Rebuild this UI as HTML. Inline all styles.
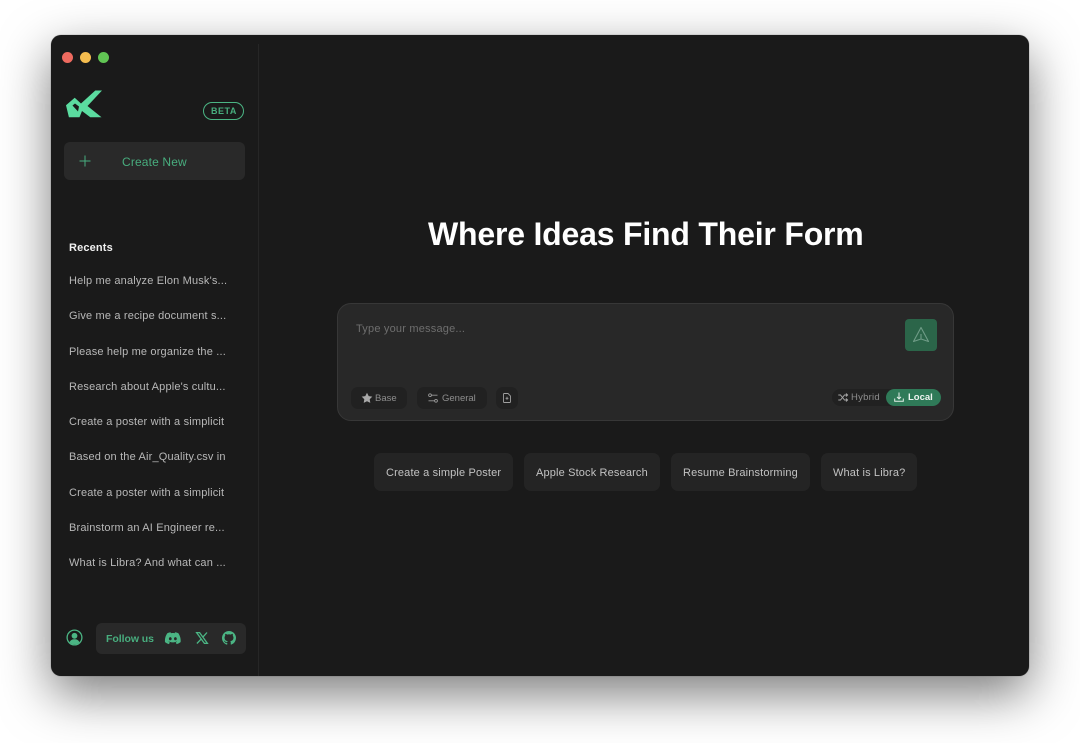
<!DOCTYPE html>
<html><head><meta charset="utf-8"><style>
*{box-sizing:border-box}
html,body{margin:0;padding:0;background:#fff;width:1080px;height:743px;overflow:hidden;font-family:"Liberation Sans",sans-serif}
.win{position:absolute;left:51px;top:35px;width:978px;height:641px;background:#1a1a1a;border-radius:10px;box-shadow:0 18px 50px rgba(0,0,0,.52),0 0 1px rgba(0,0,0,.5)}
.abs,.t{position:absolute}
.t{white-space:nowrap;line-height:14px}
.g{color:#48ad7e}
.r{color:#b8b8b8;font-size:11px;left:69px;letter-spacing:.17px}
.box{position:absolute;border-radius:6px}
svg{position:absolute;overflow:visible}
.s{color:#c2c2c2;font-size:11px;letter-spacing:.15px;top:466px}
.c{background:#242424;top:453px;height:38px;border-radius:7px}
</style></head><body>
<div class="win"></div>
<div class="abs" style="left:258px;top:44px;width:1px;height:632px;background:#262626"></div>
<div class="abs" style="left:62px;top:52px;width:11px;height:11px;border-radius:50%;background:#ee6a5f"></div>
<div class="abs" style="left:80px;top:52px;width:11px;height:11px;border-radius:50%;background:#f5bd4f"></div>
<div class="abs" style="left:98px;top:52px;width:11px;height:11px;border-radius:50%;background:#61c554"></div>

<svg style="left:0;top:0" width="1080" height="743"><path fill-rule="evenodd" fill="#5bdca0" d="M95.300 90.500H102L87.500 106 101.500 117.200H90.300L82 111 79.500 117.200H68.900L66 105.300 74.700 97.700 81 103.500ZM72.500 105.500 78 111.500 79 106.500 75 103.500Z"/></svg>
<div class="abs" style="left:203px;top:102px;width:41px;height:18px;border:1px solid #4bb584;border-radius:9px"></div>
<div class="t g" style="left:211px;top:104px;font-size:9px;font-weight:bold;letter-spacing:.5px">BETA</div>

<div class="box" style="left:64px;top:142px;width:181px;height:38px;background:#292929"></div>
<svg style="left:79px;top:155px" width="12" height="12"><path d="M6 .5V11.500M.5 6H11.500" stroke="#48ad7e" stroke-width="1" fill="none"/></svg>
<div class="t g" style="left:122px;top:155px;font-size:12px;letter-spacing:.15px">Create New</div>

<div class="t" style="left:69px;top:241px;font-size:11px;font-weight:bold;color:#f0f0f0;letter-spacing:.15px">Recents</div>
<div class="t r" style="top:274px">Help me analyze Elon Musk's...</div>
<div class="t r" style="top:309px">Give me a recipe document s...</div>
<div class="t r" style="top:345px">Please help me organize the ...</div>
<div class="t r" style="top:380px">Research about Apple's cultu...</div>
<div class="t r" style="top:415px">Create a poster with a simplicit</div>
<div class="t r" style="top:450px">Based on the Air_Quality.csv in</div>
<div class="t r" style="top:486px">Create a poster with a simplicit</div>
<div class="t r" style="top:521px">Brainstorm an AI Engineer re...</div>
<div class="t r" style="top:556px">What is Libra? And what can ...</div>

<svg style="left:66px;top:629px" width="17" height="17" viewBox="0 0 17 17"><circle cx="8.500" cy="8.500" r="7.400" fill="none" stroke="#4bb584" stroke-width="1.300"/><circle cx="8.500" cy="6.800" r="2.900" fill="#4bb584"/><path d="M3.600 13.200C4.600 10.900 6.400 10.300 8.500 10.300S12.400 10.900 13.400 13.200C12 14.700 10.300 15.300 8.500 15.300S5 14.700 3.600 13.200Z" fill="#4bb584"/></svg>
<div class="box" style="left:96px;top:623px;width:150px;height:31px;background:#292929"></div>
<div class="t g" style="left:106px;top:632px;font-size:10.500px;font-weight:bold;letter-spacing:-.05px">Follow us</div>
<svg style="left:165px;top:632px" width="16" height="13" viewBox="0 0 16 13"><path fill="#4bb584" d="M13.400 1.200C12.400.7 11.300.4 10.100.2L9.600 1.200C8.400 1 7.200 1 6 1.200L5.500.2C4.400.4 3.300.7 2.300 1.200.3 4.200-.3 7.200 0 10.100 1.300 11.100 2.600 11.700 3.900 12.100L4.900 10.500C4.400 10.300 3.900 10.100 3.500 9.800L3.800 9.500C6.300 10.700 9.300 10.700 11.800 9.500L12.100 9.800C11.700 10.100 11.200 10.300 10.700 10.500L11.700 12.100C13 11.700 14.300 11.100 15.600 10.100 16 6.700 15 3.800 13.400 1.200ZM5.300 8.300C4.500 8.300 3.900 7.600 3.900 6.700S4.500 5.100 5.300 5.100 6.700 5.800 6.700 6.700 6.100 8.300 5.300 8.300ZM10.400 8.300C9.600 8.300 9 7.600 9 6.700S9.600 5.100 10.400 5.100 11.800 5.800 11.800 6.700 11.200 8.300 10.400 8.300Z"/></svg>
<svg style="left:196px;top:632px" width="12" height="12" viewBox="0 0 12 12"><path d="M.6.6H3.600L11.400 11.400H8.400ZM11 .5 6.600 5.400M5.300 6.900.9 11.500" fill="none" stroke="#4bb584" stroke-width="1.300"/></svg>
<svg style="left:222px;top:631px" width="14" height="14" viewBox="0 0 16 16"><path fill="#4bb584" d="M8 0C3.580 0 0 3.580 0 8c0 3.540 2.290 6.530 5.470 7.590.4.070.55-.17.55-.38 0-.19-.01-.82-.01-1.490-2.010.37-2.530-.49-2.690-.94-.09-.23-.48-.94-.82-1.130-.28-.15-.68-.52-.01-.53.630-.01 1.080.58 1.230.82.720 1.210 1.870.87 2.330.66.070-.52.280-.87.510-1.070-1.780-.2-3.640-.89-3.640-3.950 0-.87.310-1.590.820-2.150-.08-.2-.36-1.020.08-2.120 0 0 .67-.21 2.200.82.640-.18 1.320-.27 2-.27s1.360.09 2 .27c1.530-1.040 2.200-.82 2.200-.82.440 1.100.16 1.920.08 2.120.51.560.82 1.270.82 2.150 0 3.070-1.870 3.750-3.650 3.950.29.250.54.730.54 1.480 0 1.070-.01 1.930-.01 2.200 0 .21.150.46.550.38A8.010 8.010 0 0 0 16 8c0-4.420-3.580-8-8-8Z"/></svg>

<div class="t" style="left:428px;top:216px;font-size:32px;line-height:37px;font-weight:bold;color:#fff;letter-spacing:-.2px">Where Ideas Find Their Form</div>

<div class="abs" style="left:337px;top:303px;width:617px;height:118px;background:#282828;border:1px solid #373737;border-radius:14px"></div>
<div class="t" style="left:356px;top:322px;font-size:11px;color:#6e6e6e;letter-spacing:.2px">Type your message...</div>
<div class="box" style="left:905px;top:319px;width:32px;height:32px;background:#2b6549;border-radius:4px"></div>
<svg style="left:912px;top:326px" width="18" height="18" viewBox="0 0 18 18"><path d="M9 1.500 16.500 15.500 9 13 1.500 15.500ZM9 8V13" fill="none" stroke="#6f9c87" stroke-width="1.100" stroke-linejoin="round"/></svg>

<div class="box" style="left:351px;top:387px;width:56px;height:22px;background:#212121;border-radius:7px"></div>
<svg style="left:361px;top:392px" width="12" height="12" viewBox="0 0 12 12"><path fill="#a8a8a8" d="M6 .8 7.700 4.100 11.300 4.600 8.700 7.200 9.300 10.900 6 9.200 2.700 10.900 3.300 7.200.7 4.600 4.300 4.100Z"/></svg>
<div class="t" style="left:375px;top:392px;font-size:9.500px;color:#8e8e8e">Base</div>
<div class="box" style="left:417px;top:387px;width:70px;height:22px;background:#212121;border-radius:7px"></div>
<svg style="left:428px;top:393px" width="10" height="10" viewBox="0 0 10 10"><g fill="none" stroke="#9a9a9a" stroke-width=".9"><circle cx="2" cy="2.200" r="1.400"/><circle cx="8" cy="7.800" r="1.400"/><path d="M3.500 2.200H9.500M.5 7.800H6.500"/></g></svg>
<div class="t" style="left:442px;top:392px;font-size:9.500px;color:#8e8e8e">General</div>
<div class="box" style="left:496px;top:387px;width:22px;height:22px;background:#212121;border-radius:7px"></div>
<svg style="left:503px;top:393px" width="8" height="10" viewBox="0 0 8 10"><path d="M.5 1.200Q.5.500 1.200.500H5L7.500 3V8.800Q7.500 9.500 6.800 9.500H1.200Q.5 9.500.5 8.800ZM4 3.800V6.800M2.600 5.300H5.400" fill="none" stroke="#a0a0a0" stroke-width=".9"/></svg>

<div class="abs" style="left:832px;top:389px;width:70px;height:17px;background:#212121;border-radius:9px"></div>
<div class="abs" style="left:886px;top:389px;width:55px;height:17px;background:#2f7a58;border-radius:9px"></div>
<svg style="left:838px;top:393px" width="10" height="9" viewBox="0 0 10 9"><path d="M.3 2H2.500L6.500 7H9.500M.3 7H2.500L6.500 2H9.500M8 .5 9.600 2 8 3.500M8 5.500 9.600 7 8 8.500" fill="none" stroke="#a8a8a8" stroke-width=".9"/></svg>
<div class="t" style="left:851px;top:391px;font-size:9.500px;color:#8e8e8e;letter-spacing:.25px">Hybrid</div>
<svg style="left:894px;top:392px" width="10" height="10" viewBox="0 0 10 10"><path d="M.7 6.500V9.300H9.300V6.500M5 .5V6.800M3 4.900 5 6.900 7 4.900" fill="none" stroke="#e4efe9" stroke-width="1"/></svg>
<div class="t" style="left:908px;top:391px;font-size:9.500px;font-weight:bold;color:#eef5f1">Local</div>

<div class="box c" style="left:374px;width:139px"></div>
<div class="t s" style="left:386px">Create a simple Poster</div>
<div class="box c" style="left:524px;width:136px"></div>
<div class="t s" style="left:536px">Apple Stock Research</div>
<div class="box c" style="left:671px;width:139px"></div>
<div class="t s" style="left:683px">Resume Brainstorming</div>
<div class="box c" style="left:821px;width:96px"></div>
<div class="t s" style="left:833px">What is Libra?</div>
</body></html>
